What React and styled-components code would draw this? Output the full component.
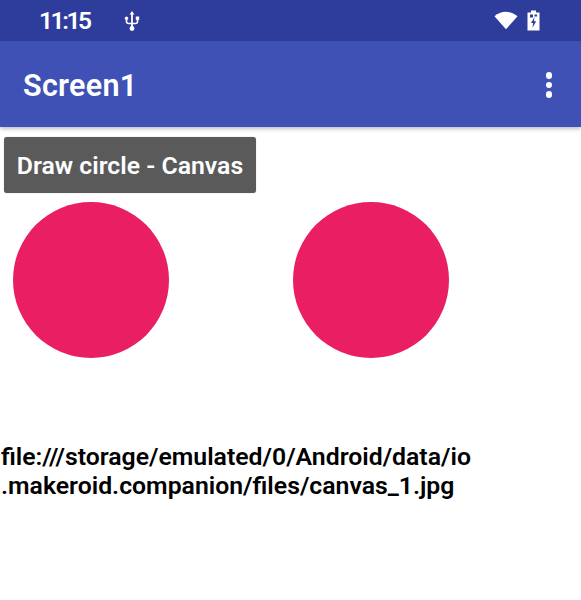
import React from 'react'
import styled, { createGlobalStyle } from 'styled-components'

const Global = createGlobalStyle`
  html, body { margin: 0; padding: 0; background: #fff; }
  body { font-family: Roboto, "Liberation Sans", sans-serif; }
`

const Page = styled.div`
  width: 581px;
  height: 600px;
  overflow: hidden;
  display: flex;
  flex-direction: column;
`

const StatusBar = styled.div`
  height: 41px;
  background: #2e3d9c;
  color: #fff;
  display: flex;
  align-items: center;
  padding: 0 41px 0 39px;
`

const Time = styled.div`
  font-size: 24.5px;
  font-weight: 600;
  letter-spacing: -2.4px;
  width: 85px;
`

const StatusIcons = styled.div`
  margin-left: auto;
  display: flex;
  align-items: center;
  gap: 9px;
`

const AppBar = styled.div`
  height: 86px;
  background: #3f51b5;
  color: #fff;
  display: flex;
  align-items: center;
  justify-content: space-between;
  padding: 2px 29px 0 23px;
  box-sizing: border-box;
  box-shadow: 0 2px 4px rgba(0, 0, 0, 0.25);
  position: relative;
`

const Title = styled.div`
  font-size: 30.5px;
  font-weight: 600;
  letter-spacing: 0.3px;
`

const Menu = styled.div`
  display: flex;
  flex-direction: column;
  gap: 3px;
`

const Dot = styled.span`
  width: 6.5px;
  height: 6.5px;
  border-radius: 50%;
  background: #fff;
`

const Content = styled.div`
  padding: 10px 0 0 4px;
  display: flex;
  flex-direction: column;
  align-items: flex-start;
`

const Button = styled.button`
  width: 252px;
  height: 56px;
  border: none;
  border-radius: 3px;
  padding: 0;
  background: #5a5a5a;
  color: #fff;
  font-family: inherit;
  font-size: 24.8px;
  font-weight: 600;
  box-shadow: 0 0 1px rgba(0, 0, 0, 0.4);
`

const Canvas = styled.div`
  display: flex;
  gap: 124px;
  padding: 9px 0 0 9px;
`

const Circle = styled.div`
  width: 156px;
  height: 156px;
  border-radius: 50%;
  background: #e91e63;
`

const Path = styled.div`
  margin: 84px 0 0 -3px;
  width: 500px;
  font-size: 24.8px;
  font-weight: 600;
  line-height: 29px;
  color: #000;
  white-space: pre-line;
`

const UsbIcon = () => (
  <svg width="16" height="22" viewBox="0 0 16 22" fill="none">
    <path d="M8 1 L10.5 4.5 H5.5 Z" fill="#fff" />
    <path d="M8 4 V18" stroke="#fff" strokeWidth="1.8" />
    <circle cx="8" cy="18.5" r="2.4" fill="#fff" />
    <path d="M2.5 9 V11.5 Q2.5 13.5 4.5 13.5 H11.5 Q13.5 13.5 13.5 11.5 V9" stroke="#fff" strokeWidth="1.6" />
    <rect x="0.8" y="6.5" width="3.4" height="3.4" rx="1.7" fill="#fff" />
    <rect x="11.8" y="6.5" width="3.4" height="3.4" fill="#fff" />
  </svg>
)

const WifiIcon = () => (
  <svg width="24" height="19" viewBox="0 0 25 19">
    <path d="M12.5 18.5 L0.5 5.2 Q5.5 0.5 12.5 0.5 Q19.5 0.5 24.5 5.2 Z" fill="#fff" />
  </svg>
)

const BatteryIcon = () => (
  <svg width="13" height="21" viewBox="0 0 13 21">
    <path d="M4 0.5 H9 V2.5 H12.5 V20.5 H0.5 V2.5 H4 Z" fill="#fff" />
    <path d="M7.6 7 L4 13 H6.2 L5.4 18 L9.2 11.3 H6.9 Z" fill="#2e3d9c" />
    <rect x="3" y="4.5" width="3" height="3" fill="#2e3d9c" />
    <rect x="7.5" y="4.5" width="2.5" height="2" fill="#2e3d9c" />
  </svg>
)

export default function App() {
  return (
    <Page>
      <Global />
      <StatusBar>
        <Time>11:15</Time>
        <UsbIcon />
        <StatusIcons>
          <WifiIcon />
          <BatteryIcon />
        </StatusIcons>
      </StatusBar>
      <AppBar>
        <Title>Screen1</Title>
        <Menu>
          <Dot />
          <Dot />
          <Dot />
        </Menu>
      </AppBar>
      <Content>
        <Button>Draw circle - Canvas</Button>
        <Canvas>
          <Circle />
          <Circle />
        </Canvas>
        <Path>{'file:///storage/emulated/0/Android/data/io\n.makeroid.companion/files/canvas_1.jpg'}</Path>
      </Content>
    </Page>
  )
}
